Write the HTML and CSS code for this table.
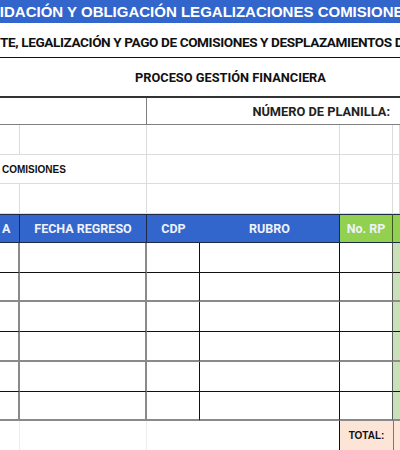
FILE: index.html
```html
<!DOCTYPE html>
<html lang="es">
<head>
<meta charset="utf-8">
<title>Liquidación y obligación legalizaciones comisiones</title>
<link rel="stylesheet" href="styles.css">
</head>
<body>
<div class="sheet">
  <div class="c full title"><span>LIQUIDACIÓN Y OBLIGACIÓN LEGALIZACIONES COMISIONES</span></div>
  <div class="c full subtitle"><span>TE, LEGALIZACIÓN Y PAGO DE COMISIONES Y DESPLAZAMIENTOS D</span></div>
  <div class="c full process"><span>PROCESO GESTIÓN FINANCIERA</span></div>

  <div class="c s2 r4 vdark"></div>
  <div class="c s3 r4 planilla">NÚMERO DE PLANILLA:</div>
  <div class="c r4"></div>

  <div class="c g"></div><div class="c g"></div><div class="c g s2"></div><div class="c g"></div><div class="c g"></div>
  <div class="c g s2 comis">COMISIONES</div><div class="c g s2"></div><div class="c g"></div><div class="c g"></div>
  <div class="c g"></div><div class="c g"></div><div class="c g s2"></div><div class="c g"></div><div class="c g"></div>

  <div class="c h hl">A</div>
  <div class="c h">FECHA REGRESO</div>
  <div class="c h nosep">CDP</div>
  <div class="c h">RUBRO</div>
  <div class="c h green">No. RP</div>
  <div class="c h green last"></div>

  <div class="c d gr"></div><div class="c d gr"></div><div class="c d"></div><div class="c d"></div><div class="c d rp"></div><div class="c d lg"></div>
  <div class="c d gr gb"></div><div class="c d gr gb"></div><div class="c d gb"></div><div class="c d gb"></div><div class="c d rp gb"></div><div class="c d lg gb"></div>
  <div class="c d gr"></div><div class="c d gr"></div><div class="c d"></div><div class="c d"></div><div class="c d rp"></div><div class="c d lg"></div>
  <div class="c d gr gb"></div><div class="c d gr gb"></div><div class="c d gb"></div><div class="c d gb"></div><div class="c d rp gb"></div><div class="c d lg gb"></div>
  <div class="c d gr"></div><div class="c d gr"></div><div class="c d"></div><div class="c d"></div><div class="c d rp"></div><div class="c d lg"></div>
  <div class="c d gr gb"></div><div class="c d gr gb"></div><div class="c d gb"></div><div class="c d gb"></div><div class="c d rp gb"></div><div class="c d lg gb"></div>

  <div class="c t"></div><div class="c t"></div><div class="c t s2 none"></div>
  <div class="c total">TOTAL:</div>
  <div class="c totalx"></div>
</div>
</body>
</html>
```

FILE: styles.css
```css
* { box-sizing: border-box; margin: 0; padding: 0; }
html, body { background: #fff; }
body { width: 400px; height: 450px; overflow: hidden; font-family: "Liberation Sans", Arial, sans-serif; }

.sheet {
  display: grid;
  width: 400px;
  grid-template-columns: 20px 127px 53px 140px 53px 7px;
  grid-template-rows: 23px 35px 40px 27px 30px 29px 30px 29px 30px 29px 30px 30px 30px 29px 30px;
}
.c { overflow: hidden; white-space: nowrap; display: flex; align-items: center; min-width: 0; }
.full { grid-column: 1 / -1; }
.s2 { grid-column: span 2; }
.s3 { grid-column: span 3; }

.title {
  background: #3366cc;
  color: #fff;
  font-weight: bold;
  font-size: 15px;
  text-indent: -36px;
}
.subtitle {
  border-bottom: 1px solid #111;
  font-family: Roboto, sans-serif;
  font-weight: bold;
  font-size: 13.6px;
  letter-spacing: -0.4px;
  color: #111;
  padding-top: 4px;
}
.process {
  border-bottom: 2px solid #333;
  font-family: Roboto, sans-serif;
  font-weight: bold;
  font-size: 12.8px;
  color: #111;
  padding-left: 135px;
}

.r4 { border-bottom: 1px solid #7f7f7f; }
.vdark { border-right: 1px solid #7f7f7f; }
.planilla {
  justify-content: flex-end;
  padding-right: 3px;
  font-family: Roboto, sans-serif;
  font-weight: bold;
  font-size: 12.8px;
  color: #222;
}

.g { border-right: 1px solid #dcdcdc; border-bottom: 1px solid #dcdcdc; }
.comis { font-size: 10px; font-weight: bold; padding-left: 2px; color: #111; }

.h {
  background: #3366cc;
  color: #eef2fb;
  font-family: Roboto, sans-serif;
  font-weight: bold;
  font-size: 12.5px;
  justify-content: center;
  border-top: 1px solid #1c2a48;
  border-bottom: 1px solid #1c2a48;
  border-right: 1px solid #1c2a48;
}
.h.hl { justify-content: flex-start; padding-left: 2px; }
.h.nosep { border-right: none; }
.h.green { background: #92d050; border-right-color: #3e5a22; }
.h.last { border-right: none; }

.d { border-bottom: 1px solid #111; border-right: 1px solid #111; }
.d.gb { border-bottom: 2px solid #8a8a8a; }
.d.gr { border-right: 2px solid #8a8a8a; }
.d.rp { border-right: 1px solid #5a5a5a; }
.d.lg { background: #c9e1b9; border-right: none; }

.t { border-right: 1px solid #ececec; }
.none { border: none; }
.total {
  background: #fce4d6;
  border-left: 1px solid #111;
  border-bottom: 1px solid #111;
  justify-content: center;
  font-size: 10px;
  font-weight: bold;
  color: #111;
  margin-left: -1px;
}
.totalx { background: #fce4d6; border-left: 1px solid #777; border-bottom: 1px solid #111; }
```
